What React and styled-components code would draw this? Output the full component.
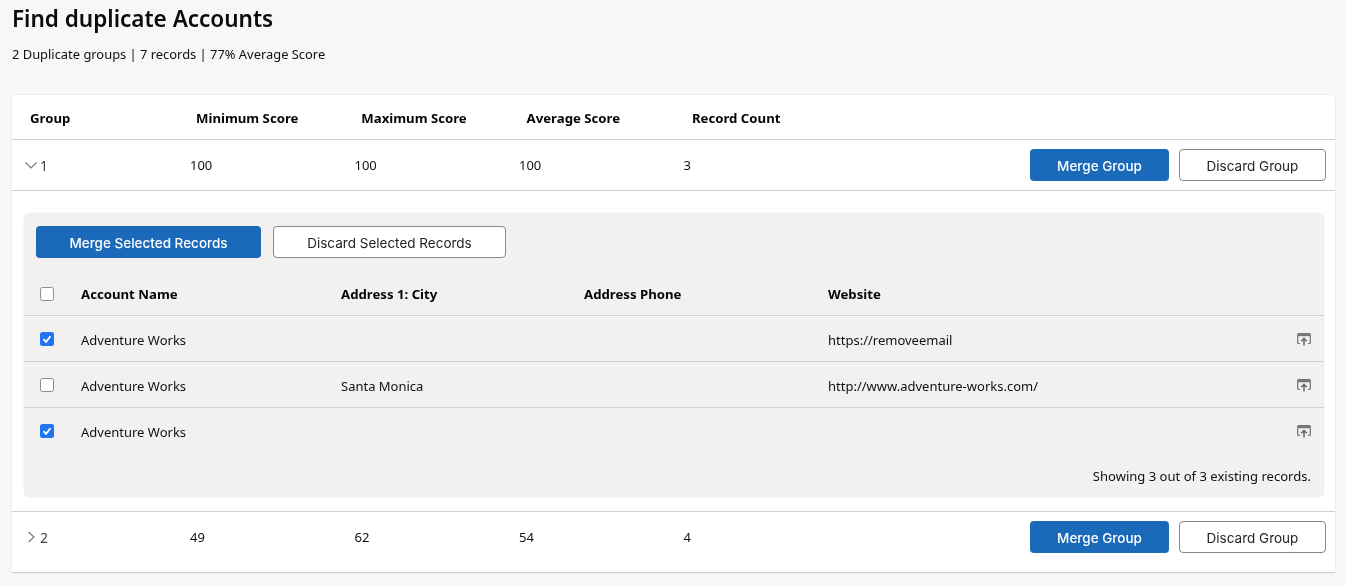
import React from "react";
import styled, { createGlobalStyle } from "styled-components";

const GlobalStyle = createGlobalStyle`
  html, body {
    margin: 0;
    padding: 0;
    background: #f8f7f5;
    overflow: hidden;
  }
  body {
    font-family: "Noto Sans", "Open Sans", sans-serif;
    color: #111;
  }
`;

const Page = styled.div`
  height: 586px;
  padding: 0 11px 0 12px;
  box-sizing: border-box;
  will-change: transform;
`;

const Title = styled.h1`
  margin: 0;
  padding-top: 4px;
  height: 36px;
  font-size: 22.5px;
  line-height: 30px;
  font-weight: 600;
  color: #0b0b0b;
`;

const Summary = styled.p`
  margin: 0;
  padding-top: 4px;
  height: 51px;
  font-size: 12.9px;
  line-height: 20px;
  color: #111;
`;

const Card = styled.section`
  background: #fff;
  border-radius: 4px 4px 0 0;
  box-shadow: 0 0 2px rgba(0, 0, 0, 0.12);
`;

const HeaderRow = styled.div`
  display: grid;
  grid-template-columns: 166px repeat(3, 165.3px) 1fr;
  align-items: center;
  height: 43px;
  padding: 1px 0 0 18px;
  border-bottom: 1px solid #d2d0ce;
`;

const HeaderCell = styled.div`
  font-size: 13.2px;
  font-weight: 700;
  color: #050505;
`;

const GroupRow = styled.div`
  display: grid;
  grid-template-columns: 166px repeat(3, 164.5px) 1fr auto;
  align-items: center;
  box-sizing: border-box;
  height: ${(p) => p.$height}px;
  padding: 0 9px ${(p) => p.$bottom || 0}px 12px;
  border-bottom: 1px solid #d2d0ce;
`;

const GroupToggle = styled.div`
  display: flex;
  align-items: center;
  gap: 2px;
  font-size: 14px;
  color: #444;
`;

const ToggleIcon = styled.svg`
  width: 14px;
  height: 14px;
  fill: none;
  stroke: #777;
  stroke-width: 1.2;
`;

const Cell = styled.div`
  font-size: 13px;
  color: #111;
`;

const RecordText = styled(Cell)`
  padding-top: 2px;
`;

const Actions = styled.div`
  display: flex;
  gap: 10px;
`;

const Button = styled.button`
  box-sizing: border-box;
  width: ${(p) => p.$width}px;
  height: 32px;
  padding: 1px 0 0;
  border-radius: 4px;
  font-family: "Inter", "Liberation Sans", sans-serif;
  font-size: 13.5px;
  font-weight: ${(p) => (p.$primary ? 500 : 400)};
  color: ${(p) => (p.$primary ? "#fff" : "#242424")};
  background: ${(p) => (p.$primary ? "#1b6ab9" : "#fff")};
  border: ${(p) => (p.$primary ? "none" : "1px solid #8a8886")};
`;

const PanelWrap = styled.div`
  padding: 22px 11px 14px 12px;
  border-bottom: 1px solid #d2d0ce;
`;

const Panel = styled.div`
  height: 284px;
  background: #f2f1ef;
  border-radius: 6px;
  box-shadow: 0 0 2px rgba(0, 0, 0, 0.1);
`;

const PanelActions = styled.div`
  display: flex;
  gap: 12px;
  padding: 13px 0 0 12px;
`;

const RecordGrid = styled.div`
  display: grid;
  grid-template-columns: 57px 260px 243px 244px 1fr 27px;
  align-items: center;
  box-sizing: border-box;
  height: ${(p) => p.$height}px;
  padding-top: ${(p) => p.$top || 0}px;
  border-bottom: ${(p) => (p.$plain ? "none" : "1px solid #d2d0ce")};
`;

const CheckCell = styled.div`
  display: flex;
  justify-content: flex-start;
  padding-left: 16px;
`;

const Check = styled.span`
  box-sizing: border-box;
  display: flex;
  align-items: center;
  justify-content: center;
  width: 14px;
  height: 14px;
  border-radius: 2.5px;
  background: ${(p) => (p.$checked ? "#1f75f0" : "#fff")};
  border: ${(p) => (p.$checked ? "none" : "1.5px solid #8b8b95")};
`;

const OpenIcon = styled.svg`
  display: block;
  width: 14px;
  height: 14px;
`;

const Footer = styled.div`
  padding: 13px 13px 0 0;
  text-align: right;
  font-size: 13.05px;
  line-height: 18px;
  color: #111;
`;

const records = [
  { checked: true, city: "", site: "https://removeemail" },
  { checked: false, city: "Santa Monica", site: "http://www.adventure-works.com/" },
  { checked: true, city: "", site: "", plain: true },
];

function GroupLine({ id, min, max, avg, count, open, height, bottom }) {
  return (
    <GroupRow $height={height} $bottom={bottom}>
      <GroupToggle>
        <ToggleIcon viewBox="0 0 14 14">
          {open ? <path d="M1.5 4.5 7 10l5.5-5.5" /> : <path d="M4.5 2 10 7l-5.5 5" />}
        </ToggleIcon>
        {id}
      </GroupToggle>
      <Cell>{min}</Cell>
      <Cell>{max}</Cell>
      <Cell>{avg}</Cell>
      <Cell>{count}</Cell>
      <Actions>
        <Button $primary $width={139}>Merge Group</Button>
        <Button $width={147}>Discard Group</Button>
      </Actions>
    </GroupRow>
  );
}

export default function App() {
  return (
    <Page>
      <GlobalStyle />
      <Title>Find duplicate Accounts</Title>
      <Summary>2 Duplicate groups | 7 records | 77% Average Score</Summary>
      <Card>
        <HeaderRow>
          <HeaderCell>Group</HeaderCell>
          <HeaderCell>Minimum Score</HeaderCell>
          <HeaderCell>Maximum Score</HeaderCell>
          <HeaderCell>Average Score</HeaderCell>
          <HeaderCell>Record Count</HeaderCell>
        </HeaderRow>
        <GroupLine id="1" min="100" max="100" avg="100" count="3" open height={51} />
        <PanelWrap>
          <Panel>
            <PanelActions>
              <Button $primary $width={225}>Merge Selected Records</Button>
              <Button $width={233}>Discard Selected Records</Button>
            </PanelActions>
            <RecordGrid $height={58} $top={14}>
              <CheckCell><Check /></CheckCell>
              <HeaderCell>Account Name</HeaderCell>
              <HeaderCell>Address 1: City</HeaderCell>
              <HeaderCell>Address Phone</HeaderCell>
              <HeaderCell>Website</HeaderCell>
            </RecordGrid>
            {records.map((r, i) => (
              <RecordGrid key={i} $height={46} $plain={r.plain}>
                <CheckCell>
                  <Check $checked={r.checked}>
                    {r.checked && (
                      <svg width="10" height="10" viewBox="0 0 10 10" fill="none" stroke="#fff" strokeWidth="1.8">
                        <path d="M1.5 5.2 4 7.8 8.5 2.2" />
                      </svg>
                    )}
                  </Check>
                </CheckCell>
                <RecordText>Adventure Works</RecordText>
                <RecordText>{r.city}</RecordText>
                <RecordText />
                <RecordText>{r.site}</RecordText>
                <OpenIcon viewBox="0 0 14 14" fill="none" stroke="#6f6f6f">
                  <path d="M3 11.5H1.5a.8.8 0 0 1-.8-.8V2.4a.8.8 0 0 1 .8-.8h11a.8.8 0 0 1 .8.8v8.3a.8.8 0 0 1-.8.8H11" strokeWidth="1.2" />
                  <path d="M1 3.2h12" strokeWidth="2" />
                  <path d="M7 13.5V6.5M4.2 9.2 7 6.4l2.8 2.8" strokeWidth="1.6" />
                </OpenIcon>
              </RecordGrid>
            ))}
            <Footer>Showing 3 out of 3 existing records.</Footer>
          </Panel>
        </PanelWrap>
        <GroupLine id="2" min="49" max="62" avg="54" count="4" height={61} bottom={10} />
      </Card>
    </Page>
  );
}
